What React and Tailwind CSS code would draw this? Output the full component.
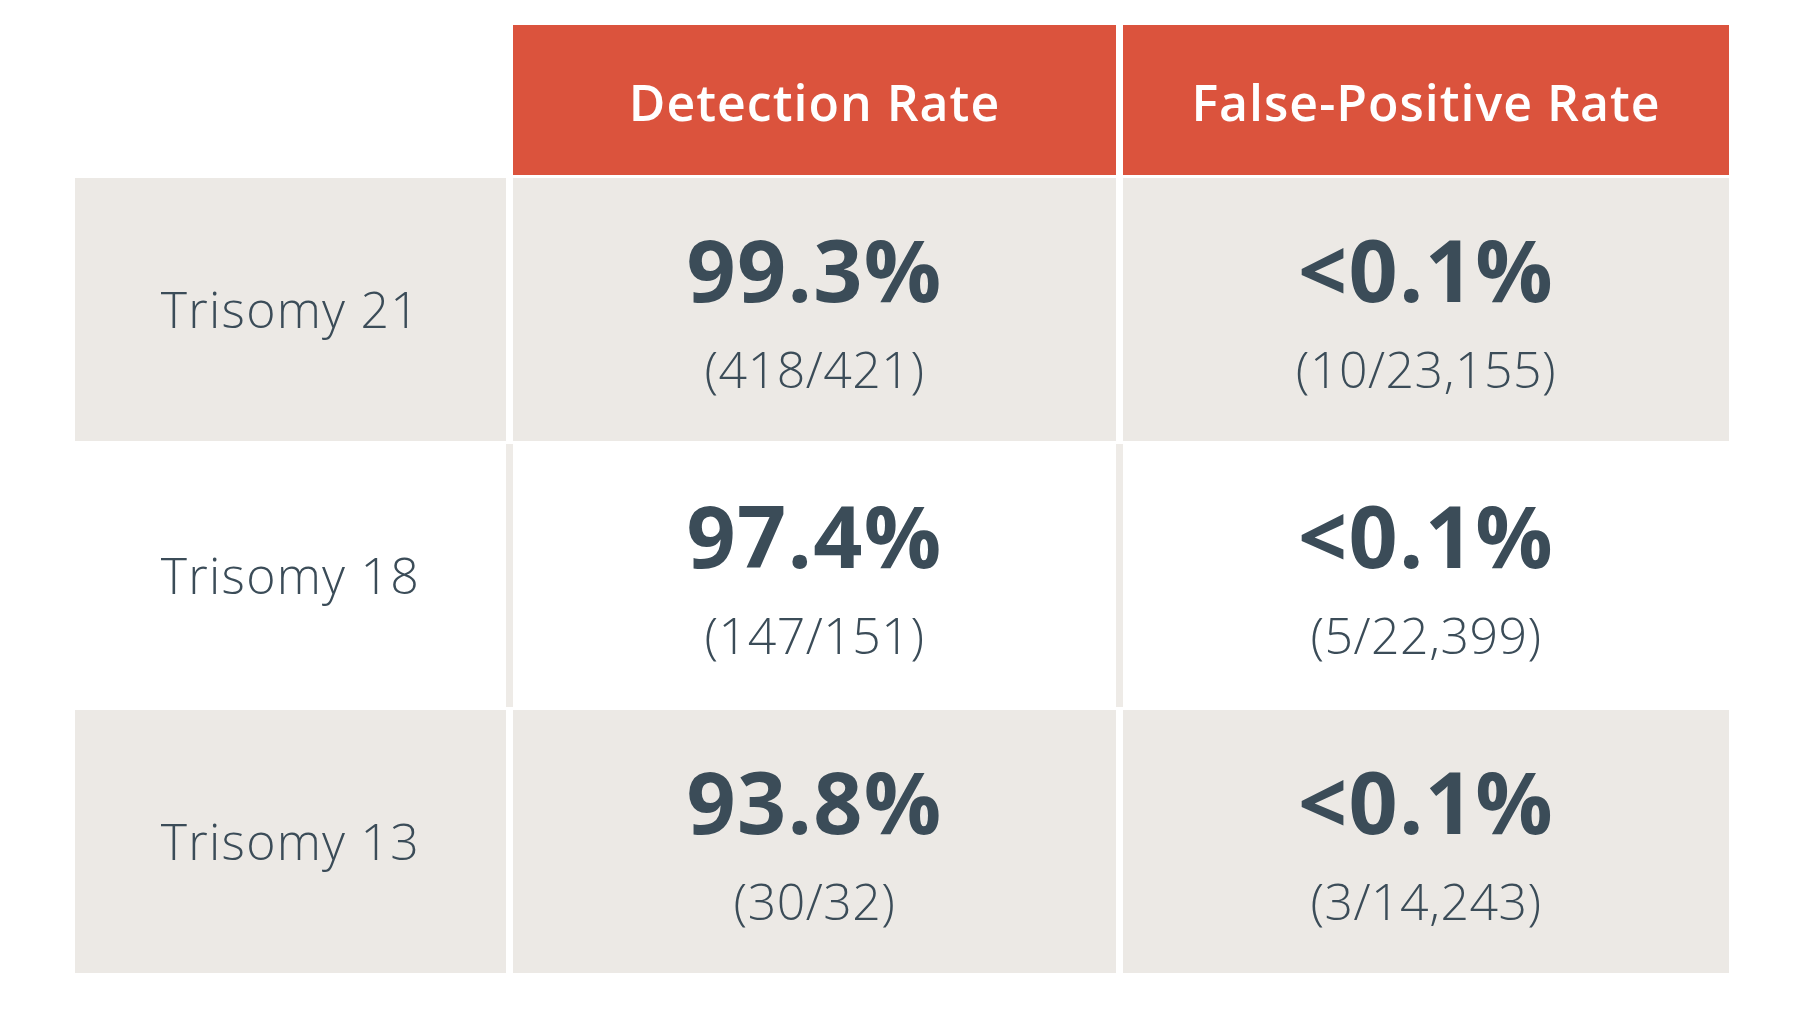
const rows = [
    { label: 'Trisomy 21', dr: '99.3%', drn: '(418/421)', fpr: '<0.1%', fprn: '(10/23,155)', shaded: true },
    { label: 'Trisomy 18', dr: '97.4%', drn: '(147/151)', fpr: '<0.1%', fprn: '(5/22,399)', shaded: false },
    { label: 'Trisomy 13', dr: '93.8%', drn: '(30/32)', fpr: '<0.1%', fprn: '(3/14,243)', shaded: true },
]

const ValueCell = ({ big, small, shaded }) => (
    <div className={`flex flex-col items-center justify-center ${shaded ? 'bg-[#ece9e5]' : 'bg-white'}`}>
        <div className="text-[86px] leading-none font-bold text-[#3b4c58] tracking-[0.015em]">{big}</div>
        <div className="mt-8 text-[50px] leading-none font-light text-[#3b4c58] tracking-[0.01em]">{small}</div>
    </div>
)

const App = () => {
    return (
        <div className="w-[1800px] h-[1012px] bg-white font-['Open_Sans','Liberation_Sans',sans-serif] pl-[75px] pt-[25px]">
            <div className="flex flex-col gap-[3px] w-[1654px]">
                <div className="grid grid-cols-[431px_603px_606px] gap-x-[7px] h-[150px]">
                    <div />
                    <div className="bg-[#db533d] flex items-center justify-center pt-[4px] text-white text-[50px] font-semibold tracking-[0.02em]">
                        Detection Rate
                    </div>
                    <div className="bg-[#db533d] flex items-center justify-center pt-[4px] text-white text-[50px] font-semibold tracking-[0.02em]">
                        False-Positive Rate
                    </div>
                </div>
                {rows.map((r) => (
                    <div
                        key={r.label}
                        className={`grid grid-cols-[431px_603px_606px] gap-x-[7px] h-[263px] ${r.shaded ? 'bg-white' : 'bg-[#eeebe7]'}`}
                    >
                        <div className={`flex items-center justify-center ${r.shaded ? 'bg-[#ece9e5]' : 'bg-white'}`}>
                            <span className="text-[50px] font-light text-[#3b4c58] tracking-[0.025em]">{r.label}</span>
                        </div>
                        <ValueCell big={r.dr} small={r.drn} shaded={r.shaded} />
                        <ValueCell big={r.fpr} small={r.fprn} shaded={r.shaded} />
                    </div>
                ))}
            </div>
        </div>
    )
}

export default App
